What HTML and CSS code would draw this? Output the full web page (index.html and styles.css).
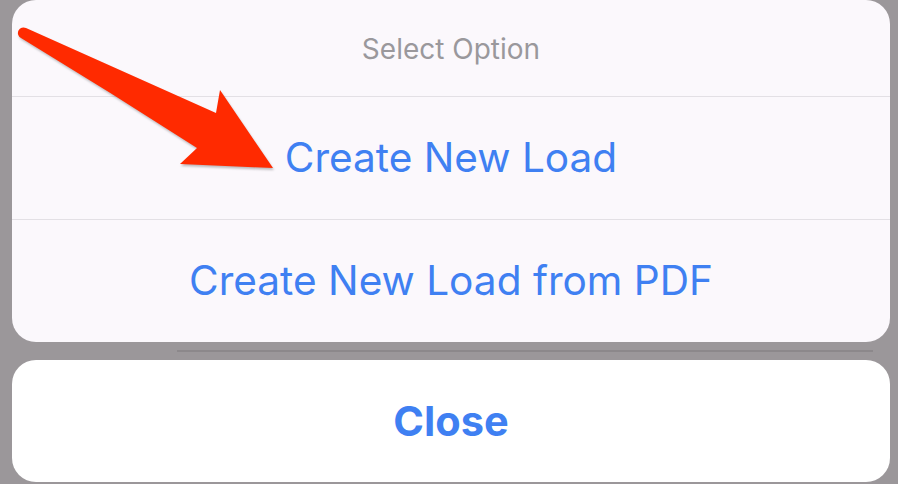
FILE: index.html
```html
<!DOCTYPE html>
<html lang="en">
<head>
    <meta charset="UTF-8">
    <meta name="viewport" content="width=device-width, initial-scale=1.0">
    <title>Select Option</title>
    <link rel="stylesheet" href="styles.css">
</head>
<body>
    <div class="sheet">
        <div class="group">
            <div class="title">Select Option</div>
            <div class="option">Create New Load</div>
            <div class="option">Create New Load from PDF</div>
        </div>
        <div class="gap"><div class="gap-line"></div></div>
        <div class="cancel">Close</div>
    </div>

    <!-- annotation arrow pointing at the first option -->
    <svg class="arrow" width="300" height="190" viewBox="0 0 300 190">
        <path d="M26,28 L216,113 L220,90 L273,168 L180,164 L197,148 Q110,92 21,38 A5,5 0 0 1 26,28 Z" fill="#ff2a00"/>
    </svg>
</body>
</html>
```

FILE: styles.css
```css
body {
    margin: 0;
    background-color: #9b979a;
    font-family: 'Inter', 'Noto Sans', sans-serif;
    height: 100vh;
    overflow: hidden;
    position: relative;
}
.sheet {
    display: flex;
    flex-direction: column;
    padding: 0 8px 0 12px;
}
.group {
    background-color: #fbf8fc;
    border-radius: 24px;
    overflow: hidden;
}
.title {
    height: 96px;
    display: flex;
    align-items: center;
    justify-content: center;
    font-size: 28px;
    color: #9a989c;
    padding-top: 2px;
    box-sizing: border-box;
}
.option {
    height: 123px;
    border-top: 1px solid #e3e0e5;
    display: flex;
    align-items: center;
    justify-content: center;
    font-size: 40.6px;
    color: #3f80f2;
    box-sizing: border-box;
    padding-bottom: 2px;
}
.gap {
    height: 18px;
    display: flex;
    align-items: center;
    padding-left: 165px;
    padding-right: 17px;
}
.gap-line {
    flex: 1;
    height: 2px;
    background-color: #8c888b;
}
.cancel {
    height: 122px;
    background-color: #ffffff;
    border-radius: 24px;
    display: flex;
    align-items: center;
    justify-content: center;
    font-size: 41.5px;
    font-weight: 700;
    color: #3f80f2;
}
.arrow {
    position: absolute;
    left: 0;
    top: 0;
    filter: drop-shadow(1px 2px 1px rgba(0, 0, 0, 0.25));
}
```
